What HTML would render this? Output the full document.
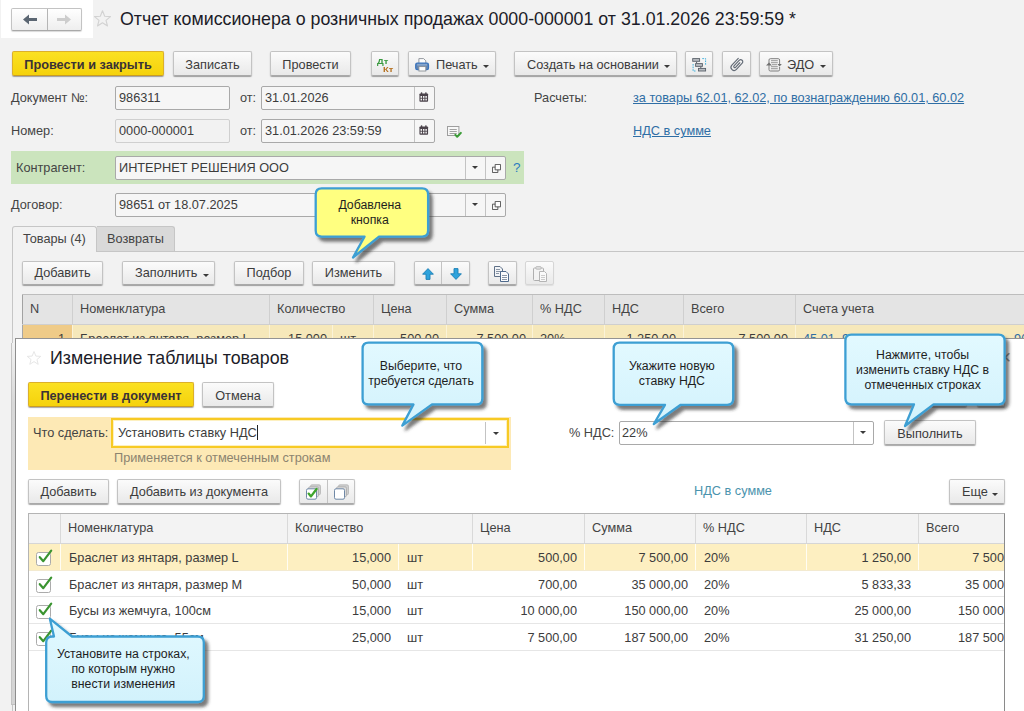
<!DOCTYPE html>
<html lang="ru">
<head>
<meta charset="utf-8">
<title>1C</title>
<style>
*{box-sizing:border-box;margin:0;padding:0}
html,body{width:1024px;height:711px;overflow:hidden}
body{background:#f2f2f2;font-family:"Liberation Sans",sans-serif;font-size:12.73px;color:#3c3c3c;position:relative}
.a{position:absolute;white-space:nowrap}
.btn{position:absolute;height:25px;border:1px solid #c3c3c3;border-bottom-color:#a9a9a9;border-radius:2px;background:linear-gradient(#fbfbfb,#e9e9e9);box-shadow:0 1px 0 rgba(0,0,0,.16),0 1px 1.5px rgba(0,0,0,.22);text-align:center;line-height:25px;color:#3c3c3c;white-space:nowrap}
.btn.y{background:linear-gradient(#fbe122,#f5d20c);border-color:#dcb02a;border-bottom-color:#c99c24;font-weight:bold;color:#3a3236}
.inp{position:absolute;height:24px;border:1px solid #a9a9a9;border-radius:2px;background:#f6f6f6;line-height:22px;padding-left:3px;color:#3c3c3c;white-space:nowrap;overflow:hidden}
.inp.ro{border-color:#cfcfcf;background:#f2f2f2}
.inp.w{background:#fff}
.lbl{position:absolute;line-height:24px;height:24px;white-space:nowrap;color:#444}
.lnk{position:absolute;line-height:24px;white-space:nowrap;color:#2f6ea5;text-decoration:underline}
.dv{position:absolute;top:0;bottom:0;width:1px;background:#c3c3c3}
.car{position:absolute;width:6px;height:3px;background:#3a3a3a;clip-path:polygon(0 0,100% 0,50% 100%)}
.th{position:absolute;top:0;height:100%;border-left:1px solid #cfcfcf;padding-left:7px;white-space:nowrap;color:#444}
.td{position:absolute;top:0;height:100%;white-space:nowrap;color:#3c3c3c}
.r{text-align:right}
.ct{position:absolute;text-align:center;color:#1e1e1e;line-height:15.1px;font-size:12.3px;white-space:nowrap}
</style>
</head>
<body>

<!-- nav -->
<div class="a" style="left:1px;top:0;width:92px;height:38px;background:#fff"></div>
<div class="a" style="left:11px;top:8px;width:71px;height:23px;border:1px solid #c3c3c3;border-bottom-color:#a9a9a9;border-radius:2px;background:linear-gradient(#fff,#eee);box-shadow:0 1px 1px rgba(0,0,0,.15)">
  <div class="dv" style="left:35px;background:#b5b5b5"></div>
  <svg class="a" style="left:11px;top:5px" width="15" height="11" viewBox="0 0 15 11"><path d="M0 5.5 L6 0.5 L6 4 L14 4 L14 7 L6 7 L6 10.5 Z" fill="#5b6672"/></svg>
  <svg class="a" style="left:45px;top:5px" width="15" height="11" viewBox="0 0 15 11"><path d="M14 5.5 L8 0.5 L8 4 L0 4 L0 7 L8 7 L8 10.5 Z" fill="#cdcdcd"/></svg>
</div>
<svg class="a" style="left:93px;top:9px" width="19" height="19" viewBox="0 0 19 19"><path d="M9.5 1.8 L11.7 7.2 L17.5 7.6 L13 11.3 L14.5 17 L9.5 13.8 L4.5 17 L6 11.3 L1.5 7.6 L7.3 7.2 Z" fill="none" stroke="#d2d2d2" stroke-width="1.1" stroke-linejoin="round"/></svg>
<div class="a" style="left:120px;top:8px;font-size:17.8px;line-height:22px;color:#1c1c28">Отчет комиссионера о розничных продажах 0000-000001 от 31.01.2026 23:59:59 *</div>

<!-- command bar -->
<div class="btn y" style="left:12px;top:51px;width:152px">Провести и закрыть</div>
<div class="btn" style="left:173px;top:51px;width:79px">Записать</div>
<div class="btn" style="left:270px;top:51px;width:81px">Провести</div>
<div class="btn" style="left:371px;top:51px;width:28px" id="dtkt"><span style="position:absolute;left:5px;top:4.7px;font-size:7.8px;line-height:9px;font-weight:bold;color:#3a9a40;transform:scaleX(1.2);transform-origin:0 0">Дт</span><span style="position:absolute;left:10.8px;top:12.6px;font-size:7.8px;line-height:9px;font-weight:bold;color:#b5701f;transform:scaleX(1.2);transform-origin:0 0">Кт</span></div>
<div class="btn" style="left:408px;top:51px;width:88px" id="print"><svg class="a" style="left:0;top:0" width="30" height="23" viewBox="0 0 30 23"><path d="M9.9 11.2 V6.6 H14.6 L16.8 8.8 V11.2" fill="#fdfdfd" stroke="#8a9096" stroke-width=".9"/><rect x="6.7" y="11.2" width="12.8" height="6.4" rx="1.6" fill="#6286b4" stroke="#3a74bd" stroke-width="1.2"/><path d="M8.2 12.9 H18" stroke="#a9c1de" stroke-width=".9"/><rect x="9.9" y="14.6" width="6.9" height="4.4" fill="#fdfdfd" stroke="#8a9096" stroke-width=".9"/></svg><span style="position:absolute;left:27px">Печать</span><i class="car" style="left:74px;top:13px"></i></div>
<div class="btn" style="left:514px;top:51px;width:163px"><span style="position:absolute;left:12px">Создать на основании</span><i class="car" style="left:149px;top:13px"></i></div>
<div class="btn" style="left:685px;top:51px;width:28px" id="struct"><svg class="a" style="left:0;top:0" width="27" height="23" viewBox="0 0 27 23"><path d="M16.3 6.6 H19.6 V13.6" fill="none" stroke="#3fb0dc" stroke-width="1" stroke-dasharray="1.6 1"/><path d="M7.1 12 V19 H10" fill="none" stroke="#3fb0dc" stroke-width="1" stroke-dasharray="1.6 1"/><path d="M10.6 9.7 V11.3 M14.8 14.7 V16" stroke="#596069" stroke-width="1"/><rect x="6.7" y="6.6000000000000005" width="6.9" height="2.7" fill="#b9bdc2" stroke="#596069" stroke-width=".9"/><rect x="9.6" y="11.6" width="6.8" height="2.75" fill="#b9bdc2" stroke="#596069" stroke-width=".9"/><rect x="12.5" y="16.4" width="7.1" height="2.6" fill="#b9bdc2" stroke="#596069" stroke-width=".9"/></svg></div>
<div class="btn" style="left:722px;top:51px;width:29px" id="clip"><svg class="a" style="left:0;top:0" width="27" height="23" viewBox="0 0 27 23"><g transform="translate(13.6 12.7) rotate(-47)"><path d="M5.8,-3.1 H-3.6 A3.1,3.1 0 0 0 -3.6,3.1 H4.9 A2.1,2.1 0 0 0 4.9,-1.1 H-2.6 A1.05,1.05 0 0 0 -2.6,1 H3.6" fill="none" stroke="#636b76" stroke-width="1.15" stroke-linecap="round"/></g></svg></div>
<div class="btn" style="left:759px;top:51px;width:74px" id="edo"><svg class="a" style="left:0;top:0" width="30" height="23" viewBox="0 0 30 23"><path d="M9 13.5 V8 Q9 6.7 10.3 6.7 H18.2 Q19.6 6.7 19.6 8 V12 M19.6 15 V17.6 Q19.6 19 18.2 19 H10.3 Q9 19 9 17.6 V13.5" fill="none" stroke="#7e7e7e" stroke-width="1"/><path d="M11 8.7 H17.8 M11 10.7 H17.8 M12 12.7 H17 M11 14.7 H17.8 M11 16.7 H17.8" stroke="#8c8c8c" stroke-width=".9"/><path d="M6 13.6 L9 10.6 L12 13.6 Z" fill="#707070"/><path d="M17.4 12 L19.6 14.6 L21.8 12 Z" fill="#707070"/></svg><span style="position:absolute;left:27px">ЭДО</span><i class="car" style="left:60px;top:13px"></i></div>

<!-- row 1 -->
<div class="lbl" style="left:11px;top:86px">Документ №:</div>
<div class="inp" style="left:115px;top:86px;width:115px">986311</div>
<div class="lbl" style="left:240px;top:86px">от:</div>
<div class="inp" style="left:261px;top:86px;width:174px;padding-left:3px">31.01.2026<div class="dv" style="left:152px"></div><svg class="a" style="left:157px;top:5px" width="9.5" height="10" viewBox="0 0 11 11" preserveAspectRatio="none"><rect x="0.5" y="1.6" width="10" height="9" rx="1" fill="#4b434b"/><rect x="2.2" y="0.2" width="1.6" height="2.6" rx=".6" fill="#4b434b"/><rect x="7.2" y="0.2" width="1.6" height="2.6" rx=".6" fill="#4b434b"/><g fill="#f4f4f4"><rect x="1.8" y="4.4" width="1.7" height="2"/><rect x="4.6" y="4.4" width="1.7" height="2"/><rect x="7.4" y="4.4" width="1.7" height="2"/><rect x="1.8" y="7.3" width="1.7" height="2"/><rect x="4.6" y="7.3" width="1.7" height="2"/><rect x="7.4" y="7.3" width="1.7" height="2"/></g></svg></div>
<div class="lbl" style="left:534px;top:86px">Расчеты:</div>
<div class="lnk" style="left:633px;top:86px">за товары 62.01, 62.02, по вознаграждению 60.01, 60.02</div>

<!-- row 2 -->
<div class="lbl" style="left:11px;top:119px">Номер:</div>
<div class="inp ro" style="left:115px;top:119px;width:115px">0000-000001</div>
<div class="lbl" style="left:240px;top:119px">от:</div>
<div class="inp" style="left:261px;top:119px;width:174px;padding-left:3px">31.01.2026 23:59:59<div class="dv" style="left:152px"></div><svg class="a" style="left:157px;top:5px" width="9.5" height="10" viewBox="0 0 11 11" preserveAspectRatio="none"><rect x="0.5" y="1.6" width="10" height="9" rx="1" fill="#4b434b"/><rect x="2.2" y="0.2" width="1.6" height="2.6" rx=".6" fill="#4b434b"/><rect x="7.2" y="0.2" width="1.6" height="2.6" rx=".6" fill="#4b434b"/><g fill="#f4f4f4"><rect x="1.8" y="4.4" width="1.7" height="2"/><rect x="4.6" y="4.4" width="1.7" height="2"/><rect x="7.4" y="4.4" width="1.7" height="2"/><rect x="1.8" y="7.3" width="1.7" height="2"/><rect x="4.6" y="7.3" width="1.7" height="2"/><rect x="7.4" y="7.3" width="1.7" height="2"/></g></svg></div>
<div class="lnk" style="left:633px;top:119px">НДС в сумме</div>

<svg class="a" style="left:447px;top:125px" width="16" height="14" viewBox="0 0 16 14"><rect x="0.5" y="1.5" width="11.4" height="9" fill="#f8f8f8" stroke="#9e9e9e" stroke-width="1"/><path d="M2.6 4.5 H9.8 M2.6 6.5 H9.8 M2.6 8.5 H9.8" stroke="#a2a2a2" stroke-width="1"/><path d="M8.4 9.8 L10.2 11.8 L13.9 7.9" fill="none" stroke="#3a9c36" stroke-width="2" stroke-linejoin="round" stroke-linecap="round"/></svg>
<!-- row 3 -->
<div class="a" style="left:11px;top:151px;width:513px;height:33px;background:#cbe4bd"></div>
<div class="lbl" style="left:16px;top:156px">Контрагент:</div>
<div class="inp" style="left:115px;top:156px;width:391px">ИНТЕРНЕТ РЕШЕНИЯ ООО<div class="dv" style="left:349px"></div><div class="dv" style="left:369px"></div><i class="car" style="left:356px;top:9px"></i><svg class="a" style="left:376px;top:7px" width="9" height="9" viewBox="0 0 10 10"><path d="M3.5 0.5 H9.5 V6.5 H3.5 Z" fill="#fdfdfd" stroke="#4a4a4a" stroke-width="1"/><path d="M3.5 3.5 H0.5 V9.5 H6.5 V6.5" fill="none" stroke="#4a4a4a" stroke-width="1"/></svg></div>
<div class="a" style="left:513px;top:156px;line-height:24px;color:#2d7cc0;font-size:13.5px">?</div>

<!-- row 4 -->
<div class="lbl" style="left:11px;top:193px">Договор:</div>
<div class="inp" style="left:115px;top:193px;width:391px">98651 от 18.07.2025<div class="dv" style="left:349px"></div><div class="dv" style="left:369px"></div><i class="car" style="left:356px;top:9px"></i><svg class="a" style="left:376px;top:7px" width="9" height="9" viewBox="0 0 10 10"><path d="M3.5 0.5 H9.5 V6.5 H3.5 Z" fill="#fdfdfd" stroke="#4a4a4a" stroke-width="1"/><path d="M3.5 3.5 H0.5 V9.5 H6.5 V6.5" fill="none" stroke="#4a4a4a" stroke-width="1"/></svg></div>

<!-- tabs -->
<div class="a" style="left:12px;top:251px;width:1012px;height:460px;border-top:1px solid #c6c6c6;border-left:1px solid #c6c6c6"></div>
<div class="a" style="left:12px;top:226px;width:85px;height:26px;border:1px solid #c6c6c6;border-bottom:none;border-radius:3px 3px 0 0;background:#f2f2f2;line-height:23px;padding-left:10px;color:#444">Товары (4)</div>
<div class="a" style="left:97px;top:226px;width:78px;height:25px;border:1px solid #c6c6c6;border-left:none;border-bottom:none;border-radius:0 3px 0 0;background:#d9d9d9;line-height:23px;padding-left:10px;color:#444">Возвраты</div>

<!-- table toolbar -->
<div class="btn" style="left:22px;top:261px;width:81px;height:24px;line-height:22px">Добавить</div>
<div class="btn" style="left:122px;top:261px;width:93px;height:24px;line-height:22px"><span style="position:absolute;left:12px">Заполнить</span><i class="car" style="left:80px;top:12px"></i></div>
<div class="btn" style="left:234px;top:261px;width:70px;height:24px;line-height:22px">Подбор</div>
<div class="btn" style="left:312px;top:261px;width:83px;height:24px;line-height:22px">Изменить</div>
<div class="btn" style="left:414px;top:261px;width:56px;height:24px;line-height:22px" id="updn"><svg class="a" style="left:7px;top:6px" width="12" height="12" viewBox="0 0 12 12"><path d="M6 0.6 L11.4 6.2 H8 V11.4 H4 V6.2 H0.6 Z" fill="#2ea3dc" stroke="#1c7fb6" stroke-width=".9" stroke-linejoin="round"/></svg><svg class="a" style="left:35px;top:6px" width="12" height="12" viewBox="0 0 12 12"><path d="M6 11.4 L11.4 5.8 H8 V0.6 H4 V5.8 H0.6 Z" fill="#2ea3dc" stroke="#1c7fb6" stroke-width=".9" stroke-linejoin="round"/></svg><div class="dv" style="left:26px"></div></div>
<div class="btn" style="left:488px;top:261px;width:29px;height:24px;line-height:22px" id="copy"><svg class="a" style="left:5px;top:4px" width="16" height="16" viewBox="0 0 16 16"><path d="M0.5 0.5 H6 L8.5 3 V10.5 H0.5 Z" fill="#f2f4f7" stroke="#5f7087" stroke-width="1"/><path d="M2 3.5 H6 M2 5.5 H7 M2 7.5 H5" stroke="#8a96a6" stroke-width="1"/><path d="M6.5 5.5 H12 L14.5 8 V15.5 H6.5 Z" fill="#fbfbfc" stroke="#4f6a8c" stroke-width="1"/><path d="M8 9.5 H13 M8 11.5 H13 M8 13.5 H13" stroke="#8a96a6" stroke-width="1"/></svg></div>
<div class="btn" style="left:525px;top:261px;width:29px;height:24px;line-height:22px;border-color:#d6d6d6;box-shadow:0 1px 1px rgba(0,0,0,.08)" id="paste"><svg class="a" style="left:7px;top:4px;opacity:.75" width="15" height="16" viewBox="0 0 15 16"><rect x="0.5" y="2" width="10" height="12.5" rx="1" fill="#f4f4f4" stroke="#9a9a9a" stroke-width="1"/><rect x="2.8" y="0.6" width="5.4" height="2.6" rx="1" fill="#d9d9d9" stroke="#9a9a9a" stroke-width=".8"/><path d="M6.5 5.5 H11.5 L13.5 7.5 V15.5 H6.5 Z" fill="#fdfdfd" stroke="#a2a2a2" stroke-width="1"/><path d="M8 9.5 H12 M8 11.5 H12 M8 13.5 H12" stroke="#c0c0c0" stroke-width="1"/></svg></div>

<!-- main table -->
<div class="a" id="mt" style="left:22px;top:294px;width:1002px;height:31px;background:#e4e4e4;border-top:1px solid #bdbdbd;border-bottom:1px solid #cfcfcf;line-height:28px">
  <div class="th" style="left:0;width:50px;border-left-color:#a2a2a2">N</div>
  <div class="th" style="left:50px">Номенклатура</div>
  <div class="th" style="left:247px">Количество</div>
  <div class="th" style="left:351px">Цена</div>
  <div class="th" style="left:424px">Сумма</div>
  <div class="th" style="left:510px">% НДС</div>
  <div class="th" style="left:582px">НДС</div>
  <div class="th" style="left:661px">Всего</div>
  <div class="th" style="left:773px">Счета учета</div>
</div>
<div class="a" id="mr" style="left:22px;top:325px;width:1002px;height:14px;background:#f6e8ba;overflow:hidden;line-height:27px">
  <div class="td" style="left:0;width:50px;background:#efcb88;border-left:1px solid #a6a6a6"></div><div class="dv" style="left:50px;background:#fbf3d8"></div><div class="dv" style="left:247px;background:#fbf3d8"></div><div class="dv" style="left:310px;background:#fbf3d8"></div><div class="dv" style="left:351px;background:#fbf3d8"></div><div class="dv" style="left:424px;background:#fbf3d8"></div><div class="dv" style="left:510px;background:#fbf3d8"></div><div class="dv" style="left:582px;background:#fbf3d8"></div><div class="dv" style="left:661px;background:#fbf3d8"></div><div class="dv" style="left:773px;background:#fbf3d8"></div>
  <div class="td r" style="left:0;width:43px">1</div>
  <div class="td" style="left:58px">Браслет из янтаря, размер L</div>
  <div class="td r" style="left:248px;width:57px">15,000</div>
  <div class="td" style="left:318px">шт</div>
  <div class="td r" style="left:352px;width:65px">500,00</div>
  <div class="td r" style="left:424px;width:80px">7 500,00</div>
  <div class="td" style="left:518px">20%</div>
  <div class="td r" style="left:582px;width:72px">1 250,00</div>
  <div class="td r" style="left:661px;width:105px">7 500,00</div>
  <div class="td" style="left:781px;color:#2f6ea5">45.01, 90.01.1, 90.02.1<span style="position:absolute;left:204px">, 90</span></div>
</div>

<!-- dialog -->
<div class="a" id="dlg" style="left:15px;top:338px;width:1009px;height:373px;background:#fff;border-left:1px solid #8e8e8e;border-top:1px solid #939393"></div>
<div class="a" style="left:11px;top:343px;width:4px;height:362px;background:linear-gradient(#f2f2f2,#d8d8d8 60px,#d5d5d5);border-left:1px solid #c4c4c4;border-bottom:1px solid #c0c0c0"></div>

<!-- dialog content -->
<svg class="a" style="left:26px;top:350px" width="16" height="16" viewBox="0 0 19 19"><path d="M9.5 1.8 L11.7 7.2 L17.5 7.6 L13 11.3 L14.5 17 L9.5 13.8 L4.5 17 L6 11.3 L1.5 7.6 L7.3 7.2 Z" fill="none" stroke="#e4e4e4" stroke-width="1.1" stroke-linejoin="round"/></svg>
<div class="a" style="left:50px;top:347px;font-size:17.8px;line-height:22px;color:#1c1c28">Изменение таблицы товаров</div>
<div class="a" style="left:999px;top:347px;font-size:21px;line-height:20px;color:#888">&#215;</div>
<div class="btn y" style="left:28px;top:382px;width:166px">Перенести в документ</div>
<div class="btn" style="left:202px;top:382px;width:72px">Отмена</div>

<div class="a" style="left:28px;top:417px;width:483px;height:53px;background:#fde9b5"></div>
<div class="lbl" style="left:33px;top:421px">Что сделать:</div>
<div class="a" style="left:111px;top:418px;width:398px;height:30px;border:2px solid #f7ca24;background:#fff;box-shadow:inset 0 0 0 1px #fdf0c0"></div>
<div class="a" style="left:118px;top:421px;line-height:23px;color:#3c3c3c">Установить ставку НДС<span style="display:inline-block;width:1px;height:15px;background:#222;vertical-align:-3px"></span></div>
<div class="a" style="left:485px;top:422px;width:1px;height:22px;background:#c3c3c3"></div>
<i class="car" style="left:493px;top:432px"></i>
<div class="a" style="left:114px;top:448px;line-height:20px;color:#8c8470">Применяется к отмеченным строкам</div>

<div class="lbl" style="left:569px;top:421px">% НДС:</div>
<div class="inp w" style="left:619px;top:421px;width:255px;padding-left:2px">22%<div class="dv" style="left:233px"></div><i class="car" style="left:240px;top:9px"></i></div>
<div class="btn" style="left:884px;top:420px;width:92px">Выполнить</div>
<div class="btn" style="left:931px;top:382px;width:36px"></div>
<div class="btn" style="left:977px;top:382px;width:28px"></div>

<div class="btn" style="left:28px;top:479px;width:81px;line-height:23px">Добавить</div>
<div class="btn" style="left:117px;top:479px;width:164px;line-height:23px">Добавить из документа</div>
<div class="btn" style="left:299px;top:479px;width:56px;line-height:23px" id="chk2"><div class="dv" style="left:27px"></div><svg class="a" style="left:6px;top:4px" width="16" height="16" viewBox="0 0 16 16"><rect x="4.5" y="0.8" width="10" height="10" rx="1.5" fill="#cfcfcf" stroke="#b5b5b5" stroke-width=".8"/><rect x="2.5" y="2.8" width="10" height="10" rx="1.5" fill="#dcdcdc" stroke="#a8a8a8" stroke-width=".8"/><rect x="0.5" y="4.8" width="10" height="10.4" rx="1.5" fill="#fff" stroke="#6f88a6" stroke-width="1"/><path d="M2.6 9.6 L5 12.4 L10.6 5" fill="none" stroke="#3fa52c" stroke-width="2.3" stroke-linecap="round" stroke-linejoin="round"/></svg><svg class="a" style="left:34px;top:4px" width="16" height="16" viewBox="0 0 16 16"><rect x="4.5" y="0.8" width="10" height="10" rx="1.5" fill="#cfcfcf" stroke="#b5b5b5" stroke-width=".8"/><rect x="2.5" y="2.8" width="10" height="10" rx="1.5" fill="#dcdcdc" stroke="#a8a8a8" stroke-width=".8"/><rect x="0.5" y="4.8" width="10" height="10.4" rx="1.5" fill="#fff" stroke="#6f88a6" stroke-width="1"/></svg></div>
<div class="a" style="left:694px;top:479px;line-height:24px;color:#4b93ad">НДС в сумме</div>
<div class="btn" style="left:949px;top:479px;width:56px;line-height:23px"><span style="position:absolute;left:12px">Еще</span><i class="car" style="left:42px;top:13px"></i></div>

<!-- dialog table -->
<div class="a" id="dt" style="left:28px;top:513px;width:977px;height:198px;border:1px solid #b4b4b4;border-right-color:#8a8a8a;border-bottom:none;background:#fff"></div>
<div class="a" id="dth" style="left:29px;top:514px;width:975px;height:30px;background:#f3f3f3;border-bottom:1px solid #d6d6d6;line-height:27px">
  <div class="th" style="left:31px;border-left-color:#d9d9d9">Номенклатура</div>
  <div class="th" style="left:258px;border-left-color:#d9d9d9">Количество</div>
  <div class="th" style="left:443px;border-left-color:#d9d9d9">Цена</div>
  <div class="th" style="left:555px;border-left-color:#d9d9d9">Сумма</div>
  <div class="th" style="left:666px;border-left-color:#d9d9d9">% НДС</div>
  <div class="th" style="left:777px;border-left-color:#d9d9d9">НДС</div>
  <div class="th" style="left:889px;border-left-color:#d9d9d9">Всего</div>
</div>


<div class="a row" style="left:29px;top:544px;width:975px;height:27px;background:#fdefc1;border-bottom:1px solid #f3ead0;line-height:27px;overflow:hidden"><div class="dv" style="left:31px;background:#fffdf3"></div><div class="dv" style="left:258px;background:#fffdf3"></div><div class="dv" style="left:369px;background:#fffdf3"></div><div class="dv" style="left:443px;background:#fffdf3"></div><div class="dv" style="left:555px;background:#fffdf3"></div><div class="dv" style="left:666px;background:#fffdf3"></div><div class="dv" style="left:777px;background:#fffdf3"></div><div class="dv" style="left:889px;background:#fffdf3"></div>
  <svg class="a" style="left:7px;top:5px" width="18" height="18" viewBox="0 0 18 18"><rect x="0.5" y="3.5" width="14" height="13" rx="2" fill="#fff" stroke="#ababab"/><path d="M3.8 8.2 L7.3 12.2 L15.2 1.6" fill="none" stroke="#3a9430" stroke-width="2.2" stroke-linecap="round" stroke-linejoin="round"/></svg>
  <div class="td" style="left:40px">Браслет из янтаря, размер L</div>
  <div class="td r" style="left:258px;width:104px">15,000</div>
  <div class="td" style="left:378px">шт</div>
  <div class="td r" style="left:443px;width:105px">500,00</div>
  <div class="td r" style="left:555px;width:104px">7 500,00</div>
  <div class="td" style="left:675px">20%</div>
  <div class="td r" style="left:777px;width:105px">1 250,00</div>
  <div class="td r" style="left:889px;width:86px">7 500</div>
</div>
<div class="a row" style="left:29px;top:571px;width:975px;height:26px;background:#fff;border-bottom:1px solid #e6e6e6;line-height:27px;overflow:hidden">
  <svg class="a" style="left:7px;top:5px" width="18" height="18" viewBox="0 0 18 18"><rect x="0.5" y="3.5" width="14" height="13" rx="2" fill="#fff" stroke="#ababab"/><path d="M3.8 8.2 L7.3 12.2 L15.2 1.6" fill="none" stroke="#3a9430" stroke-width="2.2" stroke-linecap="round" stroke-linejoin="round"/></svg>
  <div class="td" style="left:40px">Браслет из янтаря, размер M</div>
  <div class="td r" style="left:258px;width:104px">50,000</div>
  <div class="td" style="left:378px">шт</div>
  <div class="td r" style="left:443px;width:105px">700,00</div>
  <div class="td r" style="left:555px;width:104px">35 000,00</div>
  <div class="td" style="left:675px">20%</div>
  <div class="td r" style="left:777px;width:105px">5 833,33</div>
  <div class="td r" style="left:889px;width:86px">35 000</div>
</div>
<div class="a row" style="left:29px;top:597px;width:975px;height:27px;background:#fff;border-bottom:1px solid #e6e6e6;line-height:27px;overflow:hidden">
  <svg class="a" style="left:7px;top:5px" width="18" height="18" viewBox="0 0 18 18"><rect x="0.5" y="3.5" width="14" height="13" rx="2" fill="#fff" stroke="#ababab"/><path d="M3.8 8.2 L7.3 12.2 L15.2 1.6" fill="none" stroke="#3a9430" stroke-width="2.2" stroke-linecap="round" stroke-linejoin="round"/></svg>
  <div class="td" style="left:40px">Бусы из жемчуга, 100см</div>
  <div class="td r" style="left:258px;width:104px">15,000</div>
  <div class="td" style="left:378px">шт</div>
  <div class="td r" style="left:443px;width:105px">10 000,00</div>
  <div class="td r" style="left:555px;width:104px">150 000,00</div>
  <div class="td" style="left:675px">20%</div>
  <div class="td r" style="left:777px;width:105px">25 000,00</div>
  <div class="td r" style="left:889px;width:86px">150 000</div>
</div>
<div class="a row" style="left:29px;top:624px;width:975px;height:27px;background:#fff;border-bottom:1px solid #e6e6e6;line-height:27px;overflow:hidden">
  <svg class="a" style="left:7px;top:5px" width="18" height="18" viewBox="0 0 18 18"><rect x="0.5" y="3.5" width="14" height="13" rx="2" fill="#fff" stroke="#ababab"/><path d="M3.8 8.2 L7.3 12.2 L15.2 1.6" fill="none" stroke="#3a9430" stroke-width="2.2" stroke-linecap="round" stroke-linejoin="round"/></svg>
  <div class="td" style="left:40px">Бусы из жемчуга, 55см</div>
  <div class="td r" style="left:258px;width:104px">25,000</div>
  <div class="td" style="left:378px">шт</div>
  <div class="td r" style="left:443px;width:105px">7 500,00</div>
  <div class="td r" style="left:555px;width:104px">187 500,00</div>
  <div class="td" style="left:675px">20%</div>
  <div class="td r" style="left:777px;width:105px">31 250,00</div>
  <div class="td r" style="left:889px;width:86px">187 500</div>
</div>
<!-- callouts -->
<svg class="a" style="left:0;top:0;pointer-events:none" width="1024" height="711" viewBox="0 0 1024 711">
<defs>
<filter id="sh" x="-10%" y="-10%" width="130%" height="140%"><feDropShadow dx="3.5" dy="4" stdDeviation="1.8" flood-color="#2a2a2a" flood-opacity=".62"/></filter>
<linearGradient id="bg" x1="0" y1="0" x2="0" y2="1" gradientUnits="objectBoundingBox"><stop offset="0" stop-color="#e2f9ff"/><stop offset="1" stop-color="#d2f2fc"/></linearGradient>
</defs>
<path d="M321.7,188.4 H422.1 Q428.1,188.4 428.1,194.4 V230.6 Q428.1,236.6 422.1,236.6 H379 L353,257.5 L364.5,236.6 H321.7 Q315.7,236.6 315.7,230.6 V194.4 Q315.7,188.4 321.7,188.4 Z" fill="#ffff80" stroke="#3d9fd3" stroke-width="2.3" stroke-linejoin="round" filter="url(#sh)"/>
<path d="M368.6,342.6 H476.3 Q482.3,342.6 482.3,348.6 V398.4 Q482.3,404.4 476.3,404.4 H432 L402.3,425.6 L413.5,404.4 H368.6 Q362.6,404.4 362.6,398.4 V348.6 Q362.6,342.6 368.6,342.6 Z" fill="url(#bg)" stroke="#3d9fd3" stroke-width="2.3" stroke-linejoin="round" filter="url(#sh)"/>
<path d="M619.7,342.6 H727.2 Q733.2,342.6 733.2,348.6 V398.8 Q733.2,404.8 727.2,404.8 H680.7 L653.8,424 L665,404.8 H619.7 Q613.7,404.8 613.7,398.8 V348.6 Q613.7,342.6 619.7,342.6 Z" fill="url(#bg)" stroke="#3d9fd3" stroke-width="2.3" stroke-linejoin="round" filter="url(#sh)"/>
<path d="M851.4,334.7 H998.6 Q1004.6,334.7 1004.6,340.7 V398.3 Q1004.6,404.3 998.6,404.3 H933.5 L905,426 L914,404.3 H851.4 Q845.4,404.3 845.4,398.3 V340.7 Q845.4,334.7 851.4,334.7 Z" fill="url(#bg)" stroke="#3d9fd3" stroke-width="2.3" stroke-linejoin="round" filter="url(#sh)"/>
<path d="M54,636.5 L49.8,618.6 L72,636.5 H197.8 Q203.8,636.5 203.8,642.5 V696 Q203.8,702 197.8,702 H52.2 Q46.2,702 46.2,696 V642.5 Q46.2,636.5 52.2,636.5 Z" fill="url(#bg)" stroke="#3d9fd3" stroke-width="2.3" stroke-linejoin="round" filter="url(#sh)"/>
</svg>
<div class="ct" style="left:312.8px;top:198.0px;width:114px">Добавлена<br>кнопка</div>
<div class="ct" style="left:361px;top:358.7px;width:120px">Выберите, что<br>требуется сделать</div>
<div class="ct" style="left:611.9px;top:358.7px;width:120px">Укажите новую<br>ставку НДС</div>
<div class="ct" style="left:842.6px;top:347.6px;width:160px">Нажмите, чтобы<br>изменить ставку НДС в<br>отмеченных строках</div>
<div class="ct" style="left:43.3px;top:647.1px;width:160px">Установите на строках,<br>по которым нужно<br>внести изменения</div>
<!-- /callouts -->
</body>
</html>
